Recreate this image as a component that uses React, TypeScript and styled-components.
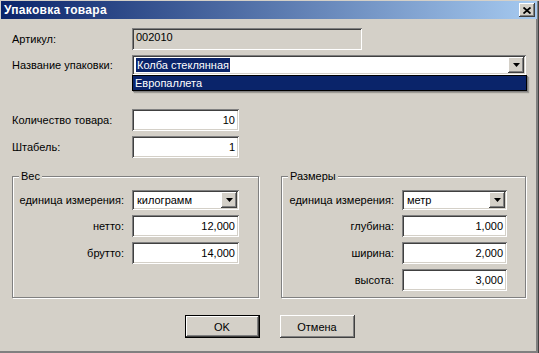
import React from "react";
import styled, { createGlobalStyle, css } from "styled-components";

const GlobalStyle = createGlobalStyle`
  html, body {
    margin: 0;
    padding: 0;
    background: #d4d0c8;
  }
  body {
    font-family: "Liberation Sans", Arial, sans-serif;
    font-size: 11px;
    color: #000;
  }
`;

const sunken = css`
  box-shadow: inset 1px 1px #808080, inset -1px -1px #ffffff,
    inset 2px 2px #404040, inset -2px -2px #d4d0c8;
`;

const raised = css`
  box-shadow: inset -1px -1px #404040, inset 1px 1px #ffffff,
    inset -2px -2px #808080, inset 2px 2px #d4d0c8;
`;

const Window = styled.div`
  position: relative;
  width: 539px;
  height: 353px;
  box-sizing: border-box;
  background: #d4d0c8;
  box-shadow: inset -1px -1px #404040, inset -3px -3px #808080;
`;

const TitleBar = styled.div`
  height: 18px;
  margin: 1px 2px 0 1px;
  display: flex;
  align-items: center;
  justify-content: space-between;
  padding: 0 2px 0 3px;
  background: linear-gradient(to right, #0a246a, #a6caf0);
  color: #fff;
  font-weight: bold;
  font-size: 12px;
  letter-spacing: 0.3px;
`;

const CloseButton = styled.div`
  width: 16px;
  height: 14px;
  display: flex;
  align-items: center;
  justify-content: center;
  background: #d4d0c8;
  ${raised};
`;

const Body = styled.div`
  display: flex;
  flex-direction: column;
  padding: 9px 12px 0 12px;
`;

const FormRow = styled.div<{ $top: number; $h: number }>`
  display: grid;
  grid-template-columns: 120px auto;
  align-items: center;
  margin-top: ${(p) => p.$top}px;
  height: ${(p) => p.$h}px;
`;

const Label = styled.span<{ $right?: boolean }>`
  white-space: nowrap;
  justify-self: ${(p) => (p.$right ? "end" : "start")};
`;

const ReadOnlyBox = styled.div`
  width: 230px;
  height: 22px;
  box-sizing: border-box;
  padding: 3px 4px 0;
  line-height: 13px;
  background: #d4d0c8;
  ${sunken};
`;

const Edit = styled.div<{ $w: number }>`
  width: ${(p) => p.$w}px;
  height: 22px;
  box-sizing: border-box;
  padding: 0 4px;
  display: flex;
  align-items: center;
  justify-content: flex-end;
  background: #fff;
  ${sunken};
`;

const Combo = styled.div<{ $w: number }>`
  position: relative;
  width: ${(p) => p.$w}px;
  height: 20px;
  box-sizing: border-box;
  padding: 2px;
  display: flex;
  align-items: center;
  background: #fff;
  ${sunken};
`;

const ComboText = styled.span`
  flex: 1;
  padding-left: 3px;
  white-space: nowrap;
`;

const Selected = styled.span`
  background: #0a246a;
  color: #fff;
  padding: 1px 1px;
  margin-left: -1px;
`;

const ComboButton = styled.div`
  width: 16px;
  height: 16px;
  display: flex;
  align-items: center;
  justify-content: center;
  background: #d4d0c8;
  ${raised};
`;

const DropList = styled.div`
  position: absolute;
  top: 100%;
  left: 0;
  right: -1px;
  height: 16px;
  box-sizing: border-box;
  border: 1px solid #000;
  background: #0a246a;
  color: #fff;
  padding-left: 2px;
  line-height: 14px;
  box-shadow: 1px 1px 0 #808080, 2px 2px 1px rgba(0, 0, 0, 0.25);
  z-index: 2;
`;

const Groups = styled.div`
  display: flex;
  gap: 22px;
  margin-top: 18px;
`;

const Group = styled.div<{ $w: number }>`
  position: relative;
  width: ${(p) => p.$w}px;
  height: 122px;
  box-sizing: border-box;
  border: 1px solid #808080;
  box-shadow: inset 1px 1px #fff, 1px 1px #fff;
`;

const Legend = styled.span`
  position: absolute;
  top: -7px;
  left: 6px;
  padding: 0 2px;
  line-height: 13px;
  background: #d4d0c8;
`;

const GroupGrid = styled.div<{ $field: number; $pr: number }>`
  display: grid;
  grid-template-columns: minmax(0, 1fr) ${(p) => p.$field}px;
  grid-template-rows: 20px repeat(3, 22px);
  gap: 5px 8px;
  align-items: center;
  padding: 13px ${(p) => p.$pr}px 0 10px;
`;

const Buttons = styled.div`
  display: flex;
  justify-content: center;
  gap: 20px;
  margin-top: 17px;
`;

const Button = styled.div<{ $default?: boolean }>`
  width: 75px;
  height: 23px;
  box-sizing: border-box;
  display: flex;
  align-items: center;
  justify-content: center;
  background: #d4d0c8;
  ${(p) =>
    p.$default
      ? css`
          border: 1px solid #000;
          box-shadow: inset -1px -1px #404040, inset 1px 1px #ffffff,
            inset -2px -2px #808080;
        `
      : raised};
`;

const Arrow = () => (
  <svg width="7" height="4" viewBox="0 0 7 4">
    <polygon points="0,0 7,0 3.5,4" fill="#000" />
  </svg>
);

const CloseIcon = () => (
  <svg width="8" height="7" viewBox="0 0 8 7">
    <path d="M0.5 0.5 L7.5 6.5 M7.5 0.5 L0.5 6.5" stroke="#000" strokeWidth="1.8" />
  </svg>
);

const ComboBox: React.FC<{ w: number; children: React.ReactNode; list?: string }> = ({
  w,
  children,
  list,
}) => (
  <Combo $w={w}>
    <ComboText>{children}</ComboText>
    <ComboButton>
      <Arrow />
    </ComboButton>
    {list && <DropList>{list}</DropList>}
  </Combo>
);

const App: React.FC = () => {
  return (
    <>
      <GlobalStyle />
      <Window>
        <TitleBar>
          <span>Упаковка товара</span>
          <CloseButton>
            <CloseIcon />
          </CloseButton>
        </TitleBar>
        <Body>
          <FormRow $top={0} $h={22}>
            <Label>Артикул:</Label>
            <ReadOnlyBox>002010</ReadOnlyBox>
          </FormRow>
          <FormRow $top={5} $h={20}>
            <Label>Название упаковки:</Label>
            <ComboBox w={394} list="Европаллета">
              <Selected>Колба стеклянная</Selected>
            </ComboBox>
          </FormRow>
          <FormRow $top={34} $h={22}>
            <Label>Количество товара:</Label>
            <Edit $w={107}>10</Edit>
          </FormRow>
          <FormRow $top={5} $h={22}>
            <Label>Штабель:</Label>
            <Edit $w={107}>1</Edit>
          </FormRow>
          <Groups>
            <Group $w={247}>
              <Legend>Вес</Legend>
              <GroupGrid $field={107} $pr={19}>
                <Label $right>единица измерения:</Label>
                <ComboBox w={107}>килограмм</ComboBox>
                <Label $right>нетто:</Label>
                <Edit $w={107}>12,000</Edit>
                <Label $right>брутто:</Label>
                <Edit $w={107}>14,000</Edit>
              </GroupGrid>
            </Group>
            <Group $w={245}>
              <Legend>Размеры</Legend>
              <GroupGrid $field={105} $pr={18}>
                <Label $right>единица измерения:</Label>
                <ComboBox w={105}>метр</ComboBox>
                <Label $right>глубина:</Label>
                <Edit $w={105}>1,000</Edit>
                <Label $right>ширина:</Label>
                <Edit $w={105}>2,000</Edit>
                <Label $right>высота:</Label>
                <Edit $w={105}>3,000</Edit>
              </GroupGrid>
            </Group>
          </Groups>
          <Buttons>
            <Button $default>OK</Button>
            <Button>Отмена</Button>
          </Buttons>
        </Body>
      </Window>
    </>
  );
};

export default App;
